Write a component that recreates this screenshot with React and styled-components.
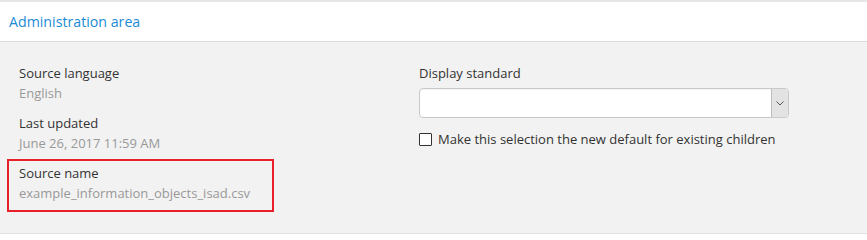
import React from "react";
import styled, { createGlobalStyle } from "styled-components";

const Global = createGlobalStyle`
  html, body { margin: 0; padding: 0; background: #fff; }
  body { font-family: "Open Sans", "Noto Sans", sans-serif; }
`;

const Section = styled.section`
  width: 867px;
  height: 234px;
  box-sizing: border-box;
  border-top: 2px solid #e6e6e6;
  display: flex;
  flex-direction: column;
`;

const Header = styled.div`
  height: 40px;
  box-sizing: border-box;
  padding: 0 9px;
  display: flex;
  align-items: center;
  border-bottom: 1px solid #dcdcdc;
  background: #fff;
`;

const Title = styled.a`
  font-size: 14.2px;
  color: #1a8bd6;
  text-decoration: none;
  margin-top: 0;
`;

const Body = styled.div`
  flex: 1;
  background: #f2f2f2;
  border-bottom: 1px solid #e2e2e2;
  display: grid;
  grid-template-columns: 400px 1fr;
  padding: 21px 0 0 19px;
`;

const Column = styled.div`
  display: flex;
  flex-direction: column;
  gap: 10px;
`;

const Field = styled.div`
  position: relative;
  display: flex;
  flex-direction: column;
  font-size: 13px;
  line-height: 20px;
`;

const Highlight = styled.div`
  position: absolute;
  left: -12px;
  top: -4px;
  width: 267px;
  height: 53px;
  box-sizing: border-box;
  border: 2px solid #e8202a;
`;

const Label = styled.div`
  color: #333;
`;

const Value = styled.div`
  color: #999;
`;

const Select = styled.div`
  margin-top: 5px;
  width: 370px;
  height: 30px;
  box-sizing: border-box;
  border: 1px solid #c9c9c9;
  border-radius: 4px;
  background: #fff;
  display: flex;
  justify-content: flex-end;
  box-shadow: inset 0 1px 1px rgba(0,0,0,0.05);
`;

const Arrow = styled.div`
  width: 16px;
  background: #e3e3e3;
  border-left: 1px solid #bdbdbd;
  border-radius: 0 3px 3px 0;
  display: flex;
  align-items: center;
  justify-content: center;
`;

const CheckRow = styled.label`
  margin-top: 11px;
  display: flex;
  align-items: center;
  gap: 6px;
  font-size: 13px;
  color: #333;
`;

const Box = styled.span`
  width: 13px;
  height: 13px;
  box-sizing: border-box;
  border: 1px solid #333;
  background: #fff;
  border-radius: 1px;
`;

export default function App() {
  return (
    <>
      <Global />
      <Section>
        <Header>
          <Title>Administration area</Title>
        </Header>
        <Body>
          <Column>
            <Field>
              <Label>Source language</Label>
              <Value>English</Value>
            </Field>
            <Field>
              <Label>Last updated</Label>
              <Value>June 26, 2017 11:59 AM</Value>
            </Field>
            <Field>
              <Highlight />
              <Label>Source name</Label>
              <Value>example_information_objects_isad.csv</Value>
            </Field>
          </Column>
          <Column>
            <Field>
              <Label>Display standard</Label>
              <Select>
                <Arrow>
                  <svg width="8" height="5" viewBox="0 0 8 5">
                    <path d="M0.5 0.5 L4 4 L7.5 0.5" fill="none" stroke="#555" strokeWidth="1" />
                  </svg>
                </Arrow>
              </Select>
              <CheckRow>
                <Box />
                Make this selection the new default for existing children
              </CheckRow>
            </Field>
          </Column>
        </Body>
      </Section>
    </>
  );
}
